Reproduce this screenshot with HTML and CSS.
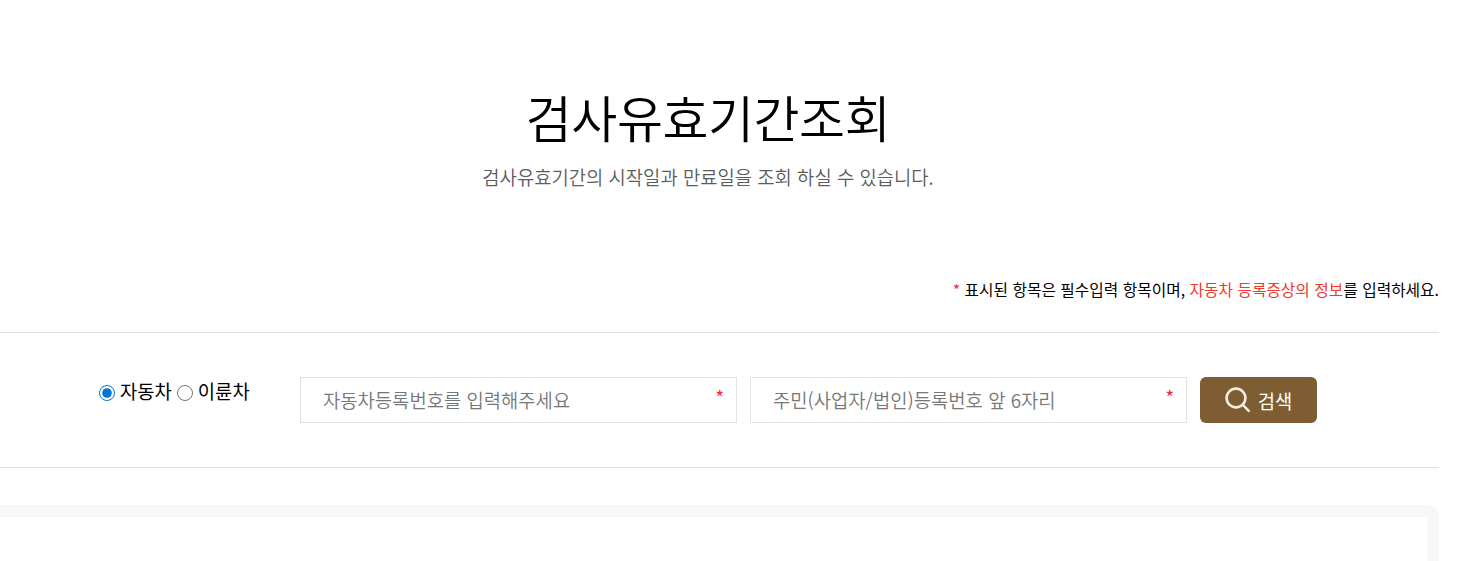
FILE: index.html
```html
<!DOCTYPE html>
<html lang="ko">
<head>
<meta charset="utf-8">
<title>검사유효기간조회</title>
<link rel="stylesheet" href="styles.css">
</head>
<body>
<main class="page">
  <header class="head">
    <h1 class="title">검사유효기간조회</h1>
    <p class="sub">검사유효기간의 시작일과 만료일을 조회 하실 수 있습니다.</p>
  </header>
  <p class="note"><span class="red">*</span> 표시된 항목은 필수입력 항목이며, <span class="red-soft">자동차 등록증상의 정보</span>를 입력하세요.</p>
  <form class="search">
    <div class="radios">
      <input class="radio" type="radio" name="kind" id="car" checked><label for="car">자동차</label>
      <input class="radio" type="radio" name="kind" id="bike"><label for="bike">이륜차</label>
    </div>
    <div class="field">
      <input class="input" type="text" placeholder="자동차등록번호를 입력해주세요">
      <span class="star">*</span>
    </div>
    <div class="field">
      <input class="input" type="text" placeholder="주민(사업자/법인)등록번호 앞 6자리">
      <span class="star">*</span>
    </div>
    <button class="btn" type="button">
      <svg class="icon" width="26" height="26" viewBox="0 0 26 26" fill="none" stroke="#f3ece1" stroke-width="2.6" stroke-linecap="round"><circle cx="11" cy="11" r="9.4"/><path d="M17.8 17.8l6 6"/></svg>
      <span>검색</span>
    </button>
  </form>
  <section class="panel"></section>
</main>
</body>
</html>
```
FILE: styles.css
```css
html, body {
  margin: 0;
  padding: 0;
  height: 561px;
  overflow: hidden;
  background: #fff;
}
body {
  font-family: "Noto Sans CJK KR", "Noto Sans", sans-serif;
  color: #000;
}
.page {
  width: 1439px;
  overflow: hidden;
  height: 561px;
}
.head {
  padding: 81px 23px 0 0;
  text-align: center;
}
.title {
  margin: 0;
  font-size: 50px;
  font-weight: 350;
  line-height: 70px;
  letter-spacing: -0.45px;
}
.sub {
  margin: 12px 0 0;
  font-size: 18.8px;
  line-height: 28px;
  color: #5c5c5c;
  font-weight: 350;
}
.note {
  margin: 85px 0 0;
  text-align: right;
  font-size: 15.75px;
  line-height: 28px;
  height: 56px;
}
.red { color: #f0303a; }
.red-soft { color: #f0392b; }
.search {
  display: flex;
  align-items: flex-start;
  padding: 44px 0 0 99px;
  box-sizing: border-box;
  border-top: 1px solid #e2e2e2;
  border-bottom: 1px solid #e2e2e2;
  height: 136px;
}
.radios {
  display: flex;
  align-items: center;
  width: 201px;
  height: 28px;
  font-size: 18.8px;
  line-height: 28px;
}
.radio {
  width: 16px;
  height: 16px;
  margin: 3px 5px 0 0;
  accent-color: #0075d9;
}
.radios label { margin-right: 5px; }
.field {
  position: relative;
  width: 437px;
  height: 46px;
  margin-right: 13px;
}
.input {
  display: block;
  width: 100%;
  height: 100%;
  box-sizing: border-box;
  border: 1px solid #e3e3e3;
  padding: 0 22px 2px;
  font: 350 18.8px "Noto Sans CJK KR", "Noto Sans", sans-serif;
  outline: 0;
}
.input::placeholder { color: #777; opacity: 1; }
.star {
  position: absolute;
  top: 9px;
  right: 13px;
  font-size: 19px;
  line-height: 22px;
  color: #e8303c;
}
.btn {
  display: flex;
  align-items: center;
  justify-content: center;
  gap: 7px;
  width: 117px;
  height: 46px;
  border: 0;
  border-radius: 6px;
  background: #7d5d31;
  color: #fff;
  font: 400 18.8px "Noto Sans CJK KR", "Noto Sans", sans-serif;
  padding: 0;
}
.panel {
  margin: 37px 0 0 -20px;
  height: 100px;
  border: 12px solid #f7f7f7;
  border-radius: 12px;
}
```
